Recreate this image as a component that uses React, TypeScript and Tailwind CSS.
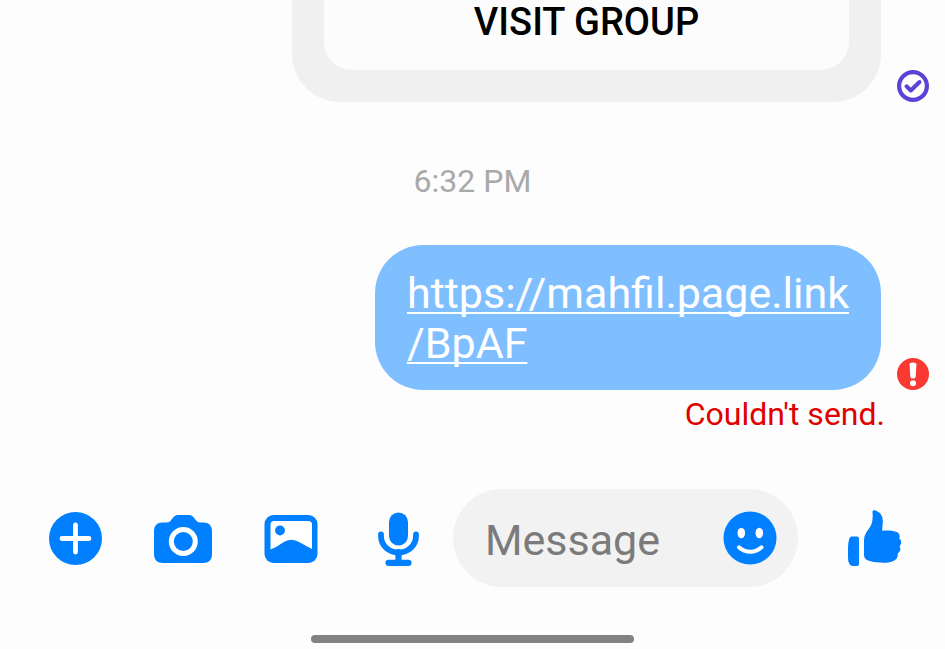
import React from "react";

const font = "font-['Roboto','Noto_Sans',sans-serif]";

function SentIcon() {
  return (
    <svg viewBox="0 0 32 32" className="size-8 shrink-0" role="img" aria-label="Sent" fill="none" stroke="#5a43d6">
      <circle cx="16" cy="16" r="13.900" strokeWidth="4.200" />
      <path d="M9.500 16.300l4.300 4.200 8.700-8.500" strokeWidth="4" strokeLinecap="round" strokeLinejoin="round" />
    </svg>
  );
}

function ErrorIcon() {
  return (
    <svg viewBox="0 0 32 32" className="size-8 shrink-0" role="img" aria-label="Not sent">
      <circle cx="16" cy="16" r="16" fill="#f93932" />
      <path d="M12.600 6.200Q12.600 4.400 16 4.400Q19.400 4.400 19.400 6.200L18.700 19Q18.500 20.600 16 20.600Q13.500 20.600 13.300 19Z" fill="#fff" />
      <circle cx="16" cy="25.300" r="3" fill="#fff" />
    </svg>
  );
}

function PlusIcon() {
  return (
    <svg viewBox="0 0 60 60" className="size-full" aria-hidden="true">
      <circle cx="30.500" cy="30.500" r="26.500" fill="#0080ff" />
      <path d="M30.500 17v27M17 30.500h27" stroke="#fff" strokeWidth="4.800" strokeLinecap="round" />
    </svg>
  );
}

function CameraIcon() {
  return (
    <svg viewBox="0 0 60 60" className="size-full" aria-hidden="true">
      <path
        d="M9.500 14.500h4.200c2 0 3.200-.8 4.300-2.200l2.200-2.800C21.400 7.900 22.800 7 24.800 7h11.400c2 0 3.400.9 4.600 2.500l2.200 2.800c1.100 1.400 2.300 2.200 4.300 2.200h3.200c5.200 0 8.500 3.300 8.500 8.500v23c0 5.800-3.200 9-9 9H10c-5.800 0-9-3.200-9-9V23c0-5.200 3.300-8.500 8.500-8.500Z"
        fill="#0080ff"
      />
      <circle cx="30.300" cy="33.500" r="12" fill="none" stroke="#fff" strokeWidth="5" />
    </svg>
  );
}

function PhotoIcon() {
  return (
    <svg viewBox="0 0 60 60" className="size-full" aria-hidden="true">
      <rect x="3.500" y="7" width="53" height="48" rx="9" fill="#0080ff" />
      <path d="M9.500 16.500q0-3.500 3.500-3.500h34.500q3.500 0 3.500 3.500V41q-6-3-12-6.500-9-5.500-17 0Q16 39 9.500 41.500Z" fill="#fff" />
      <circle cx="19" cy="22.500" r="4.900" fill="#0080ff" />
    </svg>
  );
}

function MicIcon() {
  return (
    <svg viewBox="0 0 60 60" className="size-full" aria-hidden="true">
      <rect x="20" y="4.500" width="19" height="33" rx="9.500" fill="#0080ff" />
      <path d="M12 26.500v1.500c0 9.500 8 16.500 17.500 16.500S47 37.500 47 28v-1.500" fill="none" stroke="#0080ff" strokeWidth="5.800" strokeLinecap="round" />
      <path d="M29.500 44v10M19.500 54.800h20" fill="none" stroke="#0080ff" strokeWidth="6.200" strokeLinecap="round" />
    </svg>
  );
}

function SmileIcon() {
  return (
    <svg viewBox="0 0 54 54" className="size-full" aria-hidden="true">
      <circle cx="27" cy="27" r="26.500" fill="#0080ff" />
      <ellipse cx="18.300" cy="22" rx="3.800" ry="5.200" fill="#fff" />
      <ellipse cx="36.300" cy="22" rx="3.800" ry="5.200" fill="#fff" />
      <path d="M16 36.300c6.500 6 16 6 22.500 0" fill="none" stroke="#fff" strokeWidth="4" strokeLinecap="round" />
    </svg>
  );
}

function LikeIcon() {
  return (
    <svg viewBox="0 0 60 60" className="size-full" fill="#0080ff" aria-hidden="true">
      <path d="M6.500 28.500h5.500q2 0 2 2V56q0 2-2 2H7Q3 57 3 49V40q.2-11.500 3.500-11.500Z" />
      <path d="M27.500 3.500C27.800 2.200 29 2 30.500 2.500 35 4 37.800 7.500 37.800 13c0 3.500-.6 6.500-.6 9.800 4.800-.5 10-.2 13.800.9 3.200.9 4.500 3.800 3.200 6.800 2.600 2 2.600 5.500.4 7.700 1.500 2.800.8 5.500-1.900 7.200.6 3.600-1.500 6.500-5 7.800-3.200 1.300-7.500 1.600-12.700 1.400-4.500-.1-8.500-.7-12-2-3-1-4-3-4-6V32c0-4.500 2.200-7.500 5-11.500 3.500-5 4-8.500 3.500-17Z" />
    </svg>
  );
}

const tools = [
  { label: "More actions", Icon: PlusIcon },
  { label: "Camera", Icon: CameraIcon },
  { label: "Gallery", Icon: PhotoIcon },
  { label: "Voice message", Icon: MicIcon },
];

export default function App() {
  return (
    <div className={`flex min-h-screen w-full flex-col bg-[#fdfdfd] ${font}`}>
      <main className="flex flex-col">
        <section className="flex items-end justify-end gap-4 pr-4">
          <div className="w-full max-w-[589px] rounded-b-[48px] bg-[#f0f0f0] px-8 pb-8">
            <button type="button" className="block w-full rounded-b-[28px] bg-[#fcfcfc] pb-[26px] text-[38px] leading-[44px] font-medium text-black">
              VISIT GROUP
            </button>
          </div>
          <SentIcon />
        </section>

        <time className="mt-[59px] block text-center text-[32px] leading-10 text-[#a9a9a9]">6:32 PM</time>

        <section className="mt-11 flex flex-col">
          <div className="flex items-end justify-end gap-4 pr-4">
            <div className="rounded-[48px] bg-[#80bfff] px-8 pt-[23px] pb-[22px]">
              <a href="#link" className="block text-[43px] leading-[50px] text-white underline decoration-2 underline-offset-4 [text-decoration-skip-ink:none]">
                https://mahfil.page.link
                <br />
                /BpAF
              </a>
            </div>
            <ErrorIcon />
          </div>
          <p className="mt-1 pr-15 text-right text-[32px] leading-10 text-[#e00000]">Couldn't send.</p>
        </section>
      </main>

      <form className="mt-[55px] flex items-center pr-10 pl-[45px]" onSubmit={(e) => e.preventDefault()}>
        <div className="flex shrink-0 gap-12">
          {tools.map(({ label, Icon }) => (
            <button key={label} type="button" aria-label={label} className="size-15">
              <Icon />
            </button>
          ))}
        </div>
        <div className="ml-6 flex h-[98px] min-w-0 flex-1 items-center rounded-full bg-[#f2f2f2] pr-[21px] pl-8">
          <input
            type="text"
            aria-label="Message"
            placeholder="Message"
            className="h-15 min-w-0 flex-1 bg-transparent pt-1 text-[43px] leading-[50px] outline-none placeholder:text-[#7b7b7b]"
          />
          <button type="button" aria-label="Choose an emoji" className="size-[54px] shrink-0">
            <SmileIcon />
          </button>
        </div>
        <button type="button" aria-label="Send a like" className="ml-[47px] size-15 shrink-0">
          <LikeIcon />
        </button>
      </form>

      <div className="mx-auto mt-12 mb-3 h-2 w-[323px] rounded-full bg-[#828282]" />
    </div>
  );
}
